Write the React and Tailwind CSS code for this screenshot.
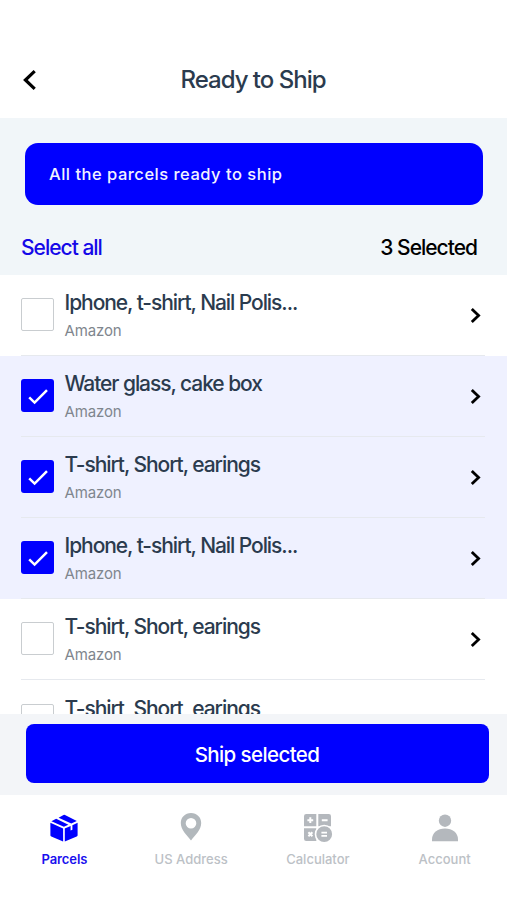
const parcels = [
  { title: "Iphone, t-shirt, Nail Polis...", selected: false },
  { title: "Water glass, cake box", selected: true },
  { title: "T-shirt, Short, earings", selected: true },
  { title: "Iphone, t-shirt, Nail Polis...", selected: true },
  { title: "T-shirt, Short, earings", selected: false },
];

function Checkbox({ checked }) {
  if (!checked) {
    return <div className="h-[33px] w-[33px] shrink-0 rounded-[2px] border-[1.5px] border-[#c9cdd0] bg-white" />;
  }
  return (
    <div className="h-[33px] w-[33px] shrink-0 rounded-[3px] bg-[#0000ff]">
      <svg className="h-full w-full" viewBox="0 0 33 33" fill="none" stroke="white" strokeWidth="2.5">
        <path d="M8.2 18.3 L13.6 23.6 L26 11.1" />
      </svg>
    </div>
  );
}

function ParcelRow({ parcel }) {
  return (
    <div className={parcel.selected ? "h-[81.1px] shrink-0 bg-[#eff1ff] pl-[21px] pr-[22px]" : "h-[81.1px] shrink-0 bg-white pl-[21px] pr-[22px]"}>
      <div className="flex h-full items-start border-b border-[#e6e9ee]">
        <div className="pt-[22.5px]">
          <Checkbox checked={parcel.selected} />
        </div>
        <div className="ml-[10.5px] flex-1 pt-[14px]">
          <div className="text-[21px] leading-7 font-medium tracking-[-1.07px] whitespace-nowrap text-[#2b3b4e]">{parcel.title}</div>
          <div className="mt-1 text-[15px] leading-5 tracking-[-0.15px] text-[#7f868e]">Amazon</div>
        </div>
        <svg className="mt-[32px] mr-[4px] h-[17px] w-[11px]" viewBox="0 0 11 17" fill="none" stroke="black" strokeWidth="2.8">
          <path d="M1.8 1.9 L8.6 8.5 L1.8 15.1" />
        </svg>
      </div>
    </div>
  );
}

function BoxIcon() {
  return (
    <svg className="h-7 w-7" viewBox="0 0 28 28" fill="#0000ff">
      <path d="M0.4 8.8 L13.1 14.6 V27.6 L1.3 22.6 Q0.4 22.2 0.4 21.2 Z" />
      <path d="M14.8 14.6 L20.6 12 V16.6 L22.4 15.8 V11.2 L27.6 8.8 V21.2 Q27.6 22.2 26.7 22.6 L14.8 27.6 Z" />
      <path d="M1.4 7.2 L6.2 4.8 L18.4 10.7 L13.9 12.7 Z" />
      <path d="M8.6 3.7 L13.5 1 Q14.2 0.5 15 1 L26.8 7 L21.3 9.5 Z" />
    </svg>
  );
}

function PinIcon() {
  return (
    <svg className="-mt-[2px] h-7 w-7" viewBox="0 0 28 28" fill="#b2b8bc">
      <path fillRule="evenodd" d="M14 0 C8.1 0 3.8 4.4 3.8 10 C3.8 17 10 22.5 14 27.4 C18 22.5 24.2 17 24.2 10 C24.2 4.4 19.9 0 14 0 Z M14 4.9 A5.3 5.3 0 1 1 14 15.5 A5.3 5.3 0 1 1 14 4.9 Z" />
    </svg>
  );
}

function CalculatorIcon() {
  return (
    <svg className="h-[30px] w-[30px]" viewBox="0 0 30 30">
      <g fill="#b4b8bd">
        <path d="M3.2 1 H13.3 V13.2 H1 V3.2 Q1 1 3.2 1 Z" />
        <path d="M15.3 1 H25.8 Q28 1 28 3.2 V13.2 H15.3 Z" />
        <path d="M1 15.2 H13.3 V28 H3.2 Q1 28 1 25.8 Z" />
      </g>
      <circle cx="21.2" cy="21.2" r="8.7" fill="#b4b8bd" stroke="white" strokeWidth="1.6" />
      <g stroke="white" strokeWidth="2">
        <path d="M4.4 7.2 H10.2 M7.3 4.3 V10.1 M18.8 7.2 H24.6" />
        <path d="M5.4 19.3 L9.4 23.3 M9.4 19.3 L5.4 23.3" />
        <path d="M18.4 19.6 H24 M18.4 22.8 H24" strokeWidth="1.8" />
      </g>
    </svg>
  );
}

function AccountIcon() {
  return (
    <svg className="h-7 w-7" viewBox="0 0 28 28" fill="#b4b8bd">
      <circle cx="14" cy="6.7" r="6.2" />
      <path d="M1 27.3 V25.5 C1 18.5 6.5 14.4 14 14.4 C21.5 14.4 27 18.5 27 25.5 V27.3 Z" />
    </svg>
  );
}

const tabs = [
  { label: "Parcels", Icon: BoxIcon, style: "font-semibold tracking-[-0.1px] text-[#1a10ee]" },
  { label: "US Address", Icon: PinIcon, style: "font-medium text-[#bcc1c6]" },
  { label: "Calculator", Icon: CalculatorIcon, style: "font-medium text-[#bcc1c6]" },
  { label: "Account", Icon: AccountIcon, style: "font-medium text-[#bcc1c6]" },
];

export default function App() {
  return (
    <div className="flex h-[900px] w-[507px] flex-col overflow-hidden bg-white font-['Inter',sans-serif]">
      <header className="flex h-[118px] shrink-0 items-start px-[22px] pt-[63.5px]">
        <svg className="mt-[5.5px] h-[22px] w-[15px]" viewBox="0 0 15 22" fill="none" stroke="black" strokeWidth="3.2">
          <path d="M12.7 2.2 L3.4 11 L12.7 19.8" />
        </svg>
        <h1 className="flex-1 pr-[16px] text-center text-[24px] leading-8 font-medium tracking-[-1px] text-[#2b3b4e]">Ready to Ship</h1>
      </header>

      <section className="h-[157px] shrink-0 bg-[#f1f6f9] pt-[25px]">
        <div className="mr-6 ml-[25px] flex h-[62px] items-center rounded-[13px] bg-[#0000ff] pt-px pl-6 text-[16.5px] font-medium tracking-[0.5px] text-[#f2f2ff]">
          All the parcels ready to ship
        </div>
        <div className="mt-[29px] flex justify-between pr-[30px] pl-[21px] text-[21px] leading-7 font-medium">
          <span className="tracking-[-1px] text-[#1508e8]">Select all</span>
          <span className="tracking-[-1px] text-black">3 Selected</span>
        </div>
      </section>

      <main className="flex min-h-0 flex-1 flex-col overflow-hidden">
        {parcels.map((parcel, i) => (
          <ParcelRow key={i} parcel={parcel} />
        ))}
        {/* The next parcel peeks out above the action bar */}
        <div className="flex min-h-0 flex-1 items-start overflow-hidden pl-[21px]">
          <div className="pt-[23.5px]">
            <Checkbox checked={false} />
          </div>
          <div className="ml-[10.5px] pt-[14.5px] text-[21px] leading-7 font-medium tracking-[-1.07px] whitespace-nowrap text-[#2b3b4e]">
            T-shirt, Short, earings
          </div>
        </div>
      </main>

      <div className="h-[81px] shrink-0 bg-[#f3f5f8] pt-[10px] pr-[18.5px] pl-[25.5px]">
        <button className="flex h-[59px] w-full items-center justify-center rounded-[8px] bg-[#0000ff] pt-[3px] text-[20.5px] font-medium tracking-[-0.6px] text-white">
          Ship selected
        </button>
      </div>

      <nav className="-mr-px grid h-[105px] shrink-0 grid-cols-4 bg-white pt-[18px] pl-px">
        {tabs.map(({ label, Icon, style }) => (
          <div key={label} className="flex flex-col items-center">
            <div className="flex h-[30px] items-center">
              <Icon />
            </div>
            <span className={`mt-[6px] text-[13px] leading-5 whitespace-nowrap ${style}`}>{label}</span>
          </div>
        ))}
      </nav>
    </div>
  );
}
